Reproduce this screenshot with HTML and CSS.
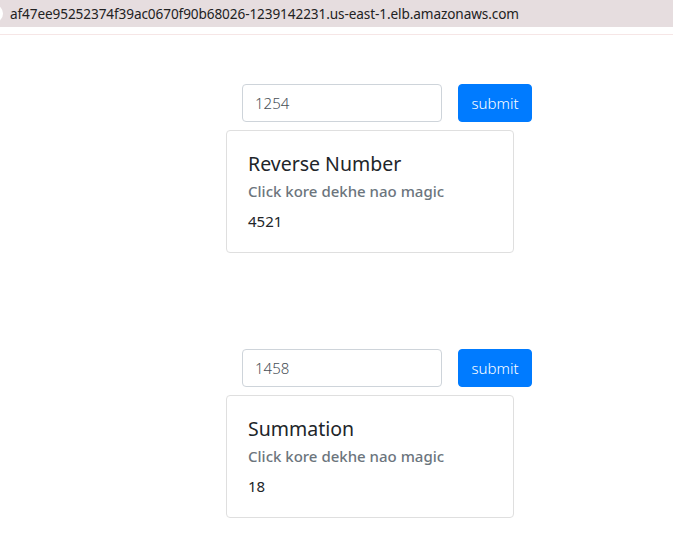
FILE: index.html
```html
<!DOCTYPE html>
<html>
<head>
<meta charset="utf-8">
<link rel="stylesheet" href="styles.css">
</head>
<body>
<div class="urlbar"><span class="edge"></span><span class="url">af47ee95252374f39ac0670f90b68026-1239142231.us-east-1.elb.amazonaws.com</span></div>
<div class="divider"></div>
<main class="page">
  <section class="block">
    <form class="row">
      <input class="field" type="text" value="1254">
      <button class="btn" type="button">submit</button>
    </form>
    <div class="card">
      <h5 class="title">Reverse Number</h5>
      <h6 class="subtitle">Click kore dekhe nao magic</h6>
      <p class="text">4521</p>
    </div>
  </section>
  <section class="block second">
    <form class="row">
      <input class="field" type="text" value="1458">
      <button class="btn" type="button">submit</button>
    </form>
    <div class="card">
      <h5 class="title">Summation</h5>
      <h6 class="subtitle">Click kore dekhe nao magic</h6>
      <p class="text">18</p>
    </div>
  </section>
</main>
</body>
</html>
```
FILE: styles.css
```css
* { box-sizing: border-box; }
body {
  margin: 0;
  background: #fff;
  font-family: "Noto Sans", "Open Sans", sans-serif;
  color: #212529;
}
.urlbar {
  height: 27px;
  background: #e6dddf;
  display: flex;
  align-items: center;
  position: relative;
  overflow: hidden;
}
.edge {
  position: absolute;
  left: -13px;
  top: 5px;
  width: 16px;
  height: 17px;
  border-radius: 50%;
  background: #fff;
}
.url {
  margin-left: 10px;
  font-size: 13.6px;
  color: #222;
  letter-spacing: -0.1px;
}
.divider {
  height: 8px;
  border-bottom: 1px solid #f6e6e6;
}
.page {
  padding-top: 49px;
  padding-left: 226px;
}
.block.second { margin-top: 96px; }
.row {
  display: flex;
  gap: 16px;
  margin: 0 0 8px 16px;
}
.field {
  width: 200px;
  height: 38px;
  padding: 6px 12px;
  border: 1px solid #ced4da;
  border-radius: 4px;
  font-family: "Noto Sans", sans-serif;
  font-size: 15px;
  font-weight: 300;
  color: #495057;
  background: #fff;
}
.btn {
  width: 74px;
  height: 38px;
  border: 1px solid #007bff;
  border-radius: 4px;
  background: #007bff;
  color: #fff;
  font-family: "Noto Sans", sans-serif;
  font-size: 15px;
  font-weight: 300;
  padding: 0;
}
.card {
  width: 288px;
  border: 1px solid #dfdfdf;
  border-radius: 4px;
  padding: 21px 20px 19px 21px;
}
.title {
  margin: 0 0 12px;
  font-size: 19.5px;
  font-weight: 400;
  line-height: 24px;
  color: #212529;
}
.subtitle {
  margin: -6px 0 8px;
  font-size: 15px;
  font-weight: 500;
  line-height: 19px;
  color: #6c757d;
}
.text {
  margin: 0;
  font-size: 15px;
  line-height: 24px;
  color: #212529;
}
```
